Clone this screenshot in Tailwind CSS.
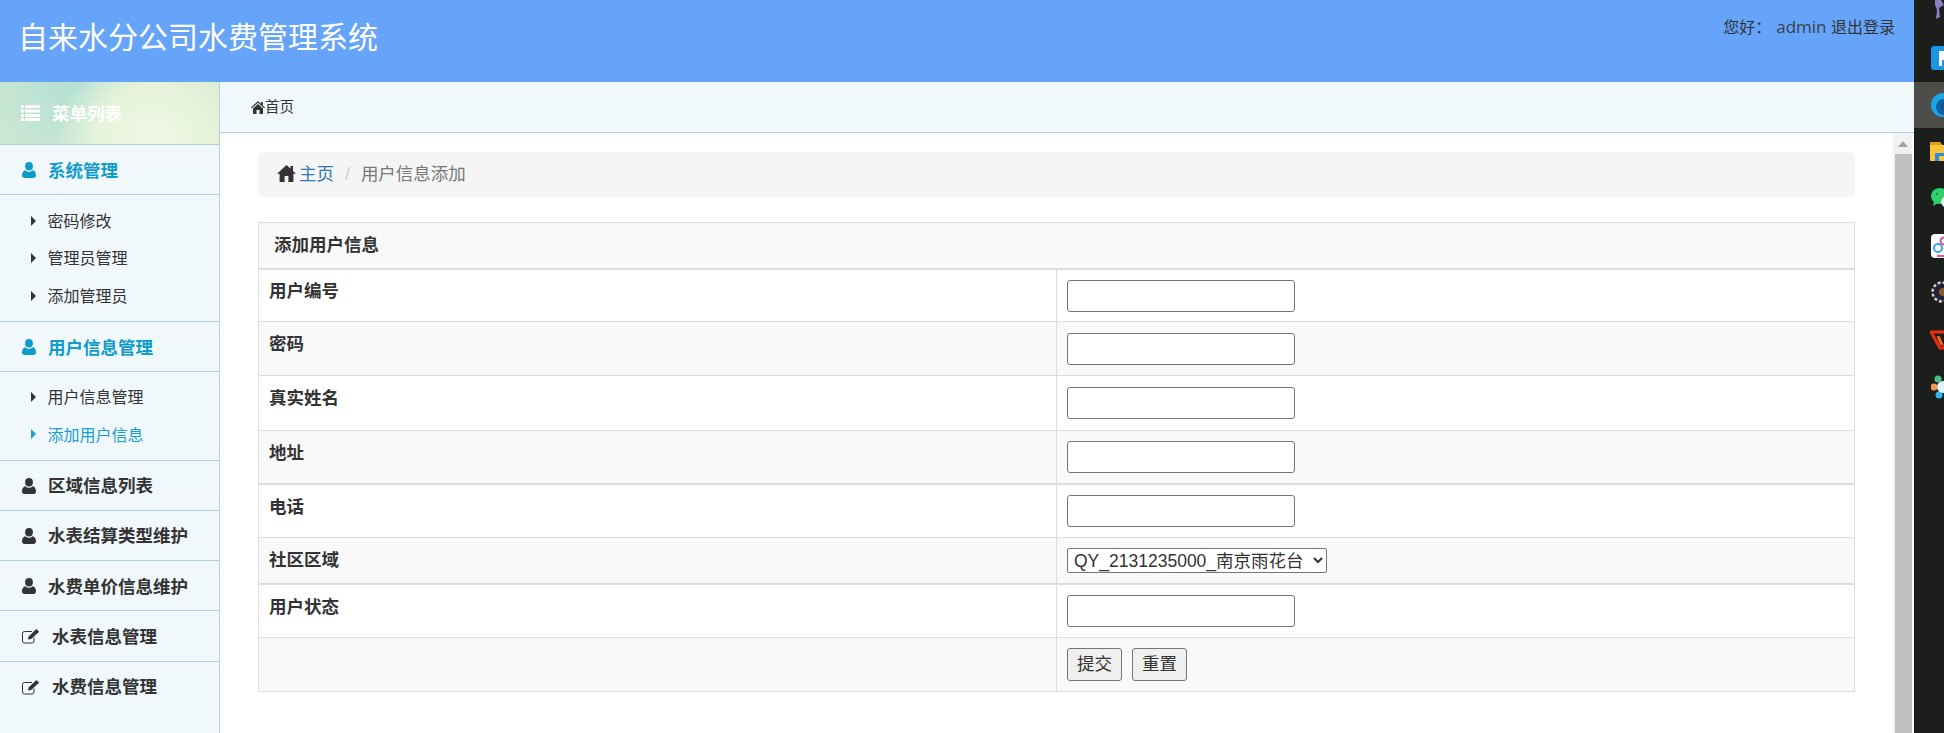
<!DOCTYPE html>
<html lang="zh-CN">
<head>
    <meta charset="UTF-8">
    <title>自来水分公司水费管理系统</title>
    <script src="https://cdn.jsdelivr.net/npm/@tailwindcss/browser@4"></script>
</head>
<body class="h-screen overflow-hidden bg-white text-[#333] font-['Liberation_Sans','Noto_Sans_CJK_SC',sans-serif]">
<div class="flex h-[733px]">
    <div class="flex flex-col w-[1914px] h-full">
        <!-- top bar -->
        <header class="flex justify-between h-[82px] shrink-0 bg-[#66a4fa]">
            <h1 class="pl-[18px] pt-[17px] text-[30px] leading-[42px] font-normal text-white">自来水分公司水费管理系统</h1>
            <div class="pr-[19px] pt-[15px] text-[16px] leading-[24px] text-[#333]"><span>您好：</span><span class="ml-[5px] text-[17px] font-['Open_Sans','Noto_Sans_CJK_SC',sans-serif] text-[#3b3f4a]">admin</span> <span>退出登录</span></div>
        </header>

        <div class="flex flex-1 min-h-0">
            <!-- left menu -->
            <aside class="w-[220px] shrink-0 bg-[#f1f8fc] border-r border-[#b4cfdf]">
                <div class="flex items-center h-[63px] pl-[21px] border-b border-[#b4cfdf] text-white font-bold text-[17.5px] bg-[radial-gradient(circle_at_70%_100%,#f0f7e4_0%,#e6f3da_35%,transparent_60%),radial-gradient(circle_at_35%_0%,#b1e0d4_0%,#c3e5d3_40%,#dcefcf_100%)]">
                    <svg class="w-[19px] h-[16px] mr-[12px]" viewBox="0 0 19 16" fill="#fff"><path d="M0 0h3v3H0zM4 0h15v3H4zM0 4.500h3v3H0zM4 4.500h15v3H4zM0 9h3v3H0zM4 9h15v3H4zM0 13h3v3H0zM4 13h15v3H4z"/></svg>
                    <span class="pt-[3px]">菜单列表</span>
                </div>

                <a class="flex items-center h-[50px] pl-[22px] border-b border-[#b4cfdf] text-[17.5px] font-bold text-[#0f9ccb]">
                    <svg class="w-[14px] h-[16px] mr-[12px]" viewBox="0 0 14 16" fill="currentColor"><ellipse cx="7" cy="4.200" rx="3.900" ry="4.200"/><path d="M0 13.500c0-3 1.200-4.800 3.500-5.200C4.500 9.300 5.700 9.800 7 9.800s2.500-.5 3.500-1.500c2.300.4 3.500 2.200 3.500 5.200 0 1.500-1 2.500-2.500 2.500h-9C1 16 0 15 0 13.500z"/></svg>
                    <span class="pt-[3px]">系统管理</span>
                </a>
                <ul class="h-[127px] pt-[7px] border-b border-[#b4cfdf] text-[16px] text-[#333]">
                    <li class="flex items-center h-[37.5px] pl-[31px]"><svg class="w-[5px] h-[10px] mr-[11.5px]" viewBox="0 0 5 10" fill="currentColor"><path d="M0 0l5 5-5 5z"/></svg><span class="pt-[2px]">密码修改</span></li>
                    <li class="flex items-center h-[37.5px] pl-[31px]"><svg class="w-[5px] h-[10px] mr-[11.5px]" viewBox="0 0 5 10" fill="currentColor"><path d="M0 0l5 5-5 5z"/></svg><span class="pt-[2px]">管理员管理</span></li>
                    <li class="flex items-center h-[37.5px] pl-[31px]"><svg class="w-[5px] h-[10px] mr-[11.5px]" viewBox="0 0 5 10" fill="currentColor"><path d="M0 0l5 5-5 5z"/></svg><span class="pt-[2px]">添加管理员</span></li>
                </ul>

                <a class="flex items-center h-[50px] pl-[22px] border-b border-[#b4cfdf] text-[17.5px] font-bold text-[#0f9ccb]">
                    <svg class="w-[14px] h-[16px] mr-[12px]" viewBox="0 0 14 16" fill="currentColor"><ellipse cx="7" cy="4.200" rx="3.900" ry="4.200"/><path d="M0 13.500c0-3 1.200-4.800 3.500-5.200C4.500 9.300 5.700 9.800 7 9.800s2.500-.5 3.500-1.500c2.300.4 3.500 2.200 3.500 5.200 0 1.500-1 2.500-2.500 2.500h-9C1 16 0 15 0 13.500z"/></svg>
                    <span class="pt-[3px]">用户信息管理</span>
                </a>
                <ul class="h-[89px] pt-[6px] border-b border-[#b4cfdf] text-[16px] text-[#333]">
                    <li class="flex items-center h-[37.5px] pl-[31px]"><svg class="w-[5px] h-[10px] mr-[11.5px]" viewBox="0 0 5 10" fill="currentColor"><path d="M0 0l5 5-5 5z"/></svg><span class="pt-[2px]">用户信息管理</span></li>
                    <li class="flex items-center h-[37.5px] pl-[31px] text-[#1a9fd2]"><svg class="w-[5px] h-[10px] mr-[11.5px]" viewBox="0 0 5 10" fill="currentColor"><path d="M0 0l5 5-5 5z"/></svg><span class="pt-[3px]">添加用户信息</span></li>
                </ul>

                <a class="flex items-center h-[50px] pl-[22px] border-b border-[#b4cfdf] text-[17.5px] font-bold">
                    <svg class="w-[14px] h-[16px] mr-[12px]" viewBox="0 0 14 16" fill="currentColor"><ellipse cx="7" cy="4.200" rx="3.900" ry="4.200"/><path d="M0 13.500c0-3 1.200-4.800 3.500-5.200C4.500 9.300 5.700 9.800 7 9.800s2.500-.5 3.500-1.500c2.300.4 3.500 2.200 3.500 5.200 0 1.500-1 2.500-2.500 2.500h-9C1 16 0 15 0 13.500z"/></svg>
                    <span class="pt-[2px]">区域信息列表</span>
                </a>
                <a class="flex items-center h-[50px] pl-[22px] border-b border-[#b4cfdf] text-[17.5px] font-bold">
                    <svg class="w-[14px] h-[16px] mr-[12px]" viewBox="0 0 14 16" fill="currentColor"><ellipse cx="7" cy="4.200" rx="3.900" ry="4.200"/><path d="M0 13.500c0-3 1.200-4.800 3.500-5.200C4.500 9.300 5.700 9.800 7 9.800s2.500-.5 3.500-1.500c2.300.4 3.500 2.200 3.500 5.200 0 1.500-1 2.500-2.500 2.500h-9C1 16 0 15 0 13.500z"/></svg>
                    <span class="pt-[2px]">水表结算类型维护</span>
                </a>
                <a class="flex items-center h-[50px] pl-[22px] border-b border-[#b4cfdf] text-[17.5px] font-bold">
                    <svg class="w-[14px] h-[16px] mr-[12px]" viewBox="0 0 14 16" fill="currentColor"><ellipse cx="7" cy="4.200" rx="3.900" ry="4.200"/><path d="M0 13.500c0-3 1.200-4.800 3.500-5.200C4.500 9.300 5.700 9.800 7 9.800s2.500-.5 3.500-1.500c2.300.4 3.500 2.200 3.500 5.200 0 1.500-1 2.500-2.500 2.500h-9C1 16 0 15 0 13.500z"/></svg>
                    <span class="pt-[3px]">水费单价信息维护</span>
                </a>
                <a class="flex items-center h-[51px] pl-[22px] border-b border-[#b4cfdf] text-[17.5px] font-bold">
                    <svg class="w-[18px] h-[15px] mr-[12px]" viewBox="0 0 18 15" fill="none"><path d="M12 8.500V12a2 2 0 0 1-2 2H2.500a2 2 0 0 1-2-2V4.500a2 2 0 0 1 2-2H10" stroke="currentColor"/><path d="M6 10.500l.6-3L13.800.6a1 1 0 0 1 1.300 0l1.400 1.400a1 1 0 0 1 0 1.300L9.200 10z" fill="currentColor"/></svg>
                    <span class="pt-[2px]">水表信息管理</span>
                </a>
                <a class="flex items-center h-[50px] pl-[22px] text-[17.5px] font-bold">
                    <svg class="w-[18px] h-[15px] mr-[12px]" viewBox="0 0 18 15" fill="none"><path d="M12 8.500V12a2 2 0 0 1-2 2H2.500a2 2 0 0 1-2-2V4.500a2 2 0 0 1 2-2H10" stroke="currentColor"/><path d="M6 10.500l.6-3L13.800.6a1 1 0 0 1 1.300 0l1.400 1.400a1 1 0 0 1 0 1.300L9.200 10z" fill="currentColor"/></svg>
                    <span class="pt-[1px]">水费信息管理</span>
                </a>
            </aside>

            <div class="flex flex-col flex-1 min-w-0">
                <!-- tab strip -->
                <div class="flex items-center h-[51px] shrink-0 pl-[31px] pt-[1px] bg-[#f1f8fc] border-b border-[#b4cfdf] text-[14.5px]">
                    <svg class="w-[14px] h-[13px]" viewBox="0 0 14 13" fill="currentColor"><path d="M7 0L0 6.500l.8.800L7 1.800l6.200 5.500.8-.8-2.200-2V1h-2v2zM2 7.500V13h3.500V9h3v4H12V7.500L7 3z"/></svg>
                    <span class="pt-[1px]">首页</span>
                </div>

                <div class="flex flex-1 min-h-0">
                    <main class="flex-1 min-w-0 pl-[38px] pr-[38px] pt-[19px]">
                        <div class="flex items-center h-[45px] pl-[19px] rounded-[5px] bg-[#f5f5f5] text-[17.5px]">
                            <svg class="w-[19px] h-[17px] mr-[3px] -mt-[2px]" viewBox="0 0 19 17" fill="currentColor"><path d="M9.500 0L0 8.800h2.600V17h5V11h3.800v6h5V8.800H19l-3-2.800V1h-2.600v2.600z"/></svg>
                            <a class="text-[#337ab7]">主页</a>
                            <span class="px-[11px] text-[#ccc]">/</span>
                            <span class="text-[#777]">用户信息添加</span>
                        </div>

                        <table class="w-full mt-[25px] table-fixed border-separate border-spacing-0 border-t border-l border-[#ddd] text-[17.5px]">
                            <tr class="bg-[#f9f9f9]">
                                <th colspan="2" class="h-[47px] pl-[15px] text-left font-bold border-r border-b-2 border-[#ddd]">添加用户信息</th>
                            </tr>
                            <tr>
                                <th class="w-[787px] h-[52px] pl-[10px] pr-[8px] pt-[8px] align-top text-left font-bold border-r border-b border-[#ddd]">用户编号</th>
                                <td class="pl-[10px] border-r border-b border-[#ddd]"><input type="text" class="block w-[228px] h-[32px] border border-[#767676] rounded-[3px] bg-white"></td>
                            </tr>
                            <tr class="bg-[#f9f9f9]">
                                <th class="h-[54px] pl-[10px] pr-[8px] pt-[9px] align-top text-left font-bold border-r border-b border-[#ddd]">密码</th>
                                <td class="pl-[10px] border-r border-b border-[#ddd]"><input type="password" class="block w-[228px] h-[32px] border border-[#767676] rounded-[3px] bg-white"></td>
                            </tr>
                            <tr>
                                <th class="h-[55px] pl-[10px] pr-[8px] pt-[9px] align-top text-left font-bold border-r border-b border-[#ddd]">真实姓名</th>
                                <td class="pl-[10px] border-r border-b border-[#ddd]"><input type="text" class="block w-[228px] h-[32px] border border-[#767676] rounded-[3px] bg-white"></td>
                            </tr>
                            <tr class="bg-[#f9f9f9]">
                                <th class="h-[54px] pl-[10px] pr-[8px] pt-[9px] align-top text-left font-bold border-r border-b-2 border-[#ddd]">地址</th>
                                <td class="pl-[10px] border-r border-b-2 border-[#ddd]"><input type="text" class="block w-[228px] h-[32px] border border-[#767676] rounded-[3px] bg-white"></td>
                            </tr>
                            <tr>
                                <th class="h-[53px] pl-[10px] pr-[8px] pt-[9px] align-top text-left font-bold border-r border-b border-[#ddd]">电话</th>
                                <td class="pl-[10px] border-r border-b border-[#ddd]"><input type="text" class="block w-[228px] h-[32px] border border-[#767676] rounded-[3px] bg-white"></td>
                            </tr>
                            <tr class="bg-[#f9f9f9]">
                                <th class="h-[47px] pl-[10px] pr-[8px] pt-[9px] align-top text-left font-bold border-r border-b-2 border-[#ddd]">社区区域</th>
                                <td class="pl-[10px] border-r border-b-2 border-[#ddd]">
                                    <select class="block w-[260px] h-[25px] pl-[2px] border border-[#767676] rounded-[2px] bg-white text-[17.5px] leading-none">
                                        <option>QY_2131235000_南京雨花台</option>
                                    </select>
                                </td>
                            </tr>
                            <tr>
                                <th class="h-[53px] pl-[10px] pr-[8px] pt-[9px] align-top text-left font-bold border-r border-b border-[#ddd]">用户状态</th>
                                <td class="pl-[10px] border-r border-b border-[#ddd]"><input type="text" class="block w-[228px] h-[32px] border border-[#767676] rounded-[3px] bg-white"></td>
                            </tr>
                            <tr class="bg-[#f9f9f9]">
                                <th class="h-[54px] border-r border-b border-[#ddd]"></th>
                                <td class="pl-[10px] border-r border-b border-[#ddd]">
                                    <div class="flex gap-[10px]">
                                        <button type="button" class="w-[55px] h-[33px] border border-[#767676] rounded-[3px] bg-[#efefef]">提交</button>
                                        <button type="button" class="w-[55px] h-[33px] border border-[#767676] rounded-[3px] bg-[#efefef]">重置</button>
                                    </div>
                                </td>
                            </tr>
                        </table>
                    </main>

                    <!-- scrollbar of the inner frame -->
                    <div class="flex flex-col w-[21px] shrink-0 bg-[#f1f1f1] border-r-2 border-white">
                        <div class="flex justify-center items-center h-[21px] shrink-0">
                            <svg class="w-[10px] h-[6px]" viewBox="0 0 10 6" fill="#a3a3a3"><path d="M5 0l5 6H0z"/></svg>
                        </div>
                        <div class="flex-1 ml-[2px] bg-[#c1c1c1]"></div>
                    </div>
                </div>
            </div>
        </div>
    </div>

    <!-- windows taskbar on the right -->
    <div class="flex flex-col gap-[9px] w-[30px] -mt-[8px] overflow-hidden bg-[#1c1e1b]">
        <div class="flex items-center h-[38px] shrink-0">
            <div class="w-[2px] h-full bg-[#6cb0ea]"></div>
            <svg class="w-[24px] h-[24px] ml-[17px] shrink-0 -mt-[4px]" viewBox="0 0 24 24"><path d="M4 1l6 2 3 5-5 3 1 9-4 2 1-9-2-5z" fill="#8b7fc4"/></svg>
        </div>
        <div class="flex items-center h-[38px] shrink-0">
            <div class="w-[2px] h-full bg-[#6cb0ea]"></div>
            <svg class="w-[24px] h-[24px] ml-[17px] shrink-0" viewBox="0 0 24 24"><rect width="24" height="24" rx="3" fill="#1b96e6"/><path d="M8 5h6a4.500 4.500 0 0 1 0 9h-3v6H8z" fill="#fff"/></svg>
        </div>
        <div class="flex items-center h-[46px] shrink-0 -my-[4px] bg-[#4d4d4a]">
            <div class="w-[2px] h-full bg-[#6cb0ea]"></div>
            <svg class="w-[24px] h-[24px] ml-[17px] shrink-0" viewBox="0 0 24 24"><circle cx="12" cy="12" r="12" fill="#19a5e4"/><circle cx="13" cy="14" r="8" fill="#0f5ea8"/><circle cx="15" cy="14" r="5" fill="#1c4f8a"/></svg>
        </div>
        <div class="flex items-center h-[38px] shrink-0">
            <div class="w-[3px] h-full bg-[#4f93c9]"></div>
            <svg class="w-[24px] h-[24px] ml-[16px] shrink-0 -mt-[2px]" viewBox="0 0 24 24"><path d="M0 3h10l2 3h12v16H0z" fill="#fcc43c"/><path d="M0 3h10l2 3H0z" fill="#e09f20"/><path d="M5 14h12v8H5z" fill="#2a8fdc"/><path d="M9 17h8v5H9z" fill="#fcc43c"/></svg>
        </div>
        <div class="flex items-center h-[38px] shrink-0">
            <div class="w-[2px] h-full bg-[#6cb0ea]"></div>
            <svg class="w-[24px] h-[24px] ml-[17px] shrink-0" viewBox="0 0 24 24"><ellipse cx="9" cy="9" rx="9" ry="8" fill="#2ed06a"/><path d="M3 14l-1 5 5-3z" fill="#2ed06a"/><circle cx="6" cy="7" r="1" fill="#136b35"/><ellipse cx="17" cy="15" rx="7" ry="6" fill="#e8f0ea"/></svg>
        </div>
        <div class="flex items-center h-[38px] shrink-0">
            <div class="w-[2px] h-full bg-[#6cb0ea]"></div>
            <svg class="w-[24px] h-[24px] ml-[17px] shrink-0" viewBox="0 0 24 24"><rect width="24" height="24" rx="4" fill="#fff"/><circle cx="7" cy="14" r="4" fill="none" stroke="#2aa8f0" stroke-width="2"/><circle cx="13" cy="7" r="3.500" fill="none" stroke="#f04e8c" stroke-width="2"/><path d="M6 22h10" stroke="#f04e8c" stroke-width="2"/></svg>
        </div>
        <div class="flex items-center h-[38px] shrink-0">
            <div class="w-[2px] h-full bg-[#6cb0ea]"></div>
            <svg class="w-[24px] h-[24px] ml-[17px] shrink-0" viewBox="0 0 24 24"><circle cx="11" cy="11" r="9.500" fill="#26203a" stroke="#cfcfcf" stroke-width="2.500" stroke-dasharray="3 2"/><circle cx="12" cy="11" r="4" fill="#8a5a22"/></svg>
        </div>
        <div class="flex items-center h-[38px] shrink-0">
            <div class="w-[3px] h-full bg-[#4f93c9]"></div>
            <svg class="w-[24px] h-[24px] ml-[16px] shrink-0" viewBox="0 0 24 24"><path d="M1 4h22l-10 16h-3z" fill="none" stroke="#ef2c10" stroke-width="3"/><path d="M8 8l4 9" stroke="#f56a10" stroke-width="3"/></svg>
        </div>
        <div class="flex items-center h-[38px] shrink-0">
            <div class="w-[2px] h-full bg-[#6cb0ea]"></div>
            <svg class="w-[24px] h-[24px] ml-[17px] shrink-0" viewBox="0 0 24 24"><circle cx="7" cy="4" r="3.500" fill="#45c08a"/><circle cx="3" cy="12" r="3.500" fill="#f09a50"/><circle cx="8" cy="20" r="3.500" fill="#2fb6e8"/><circle cx="12" cy="12" r="6" fill="#dff3fb"/></svg>
        </div>
    </div>
</div>
</body>
</html>
